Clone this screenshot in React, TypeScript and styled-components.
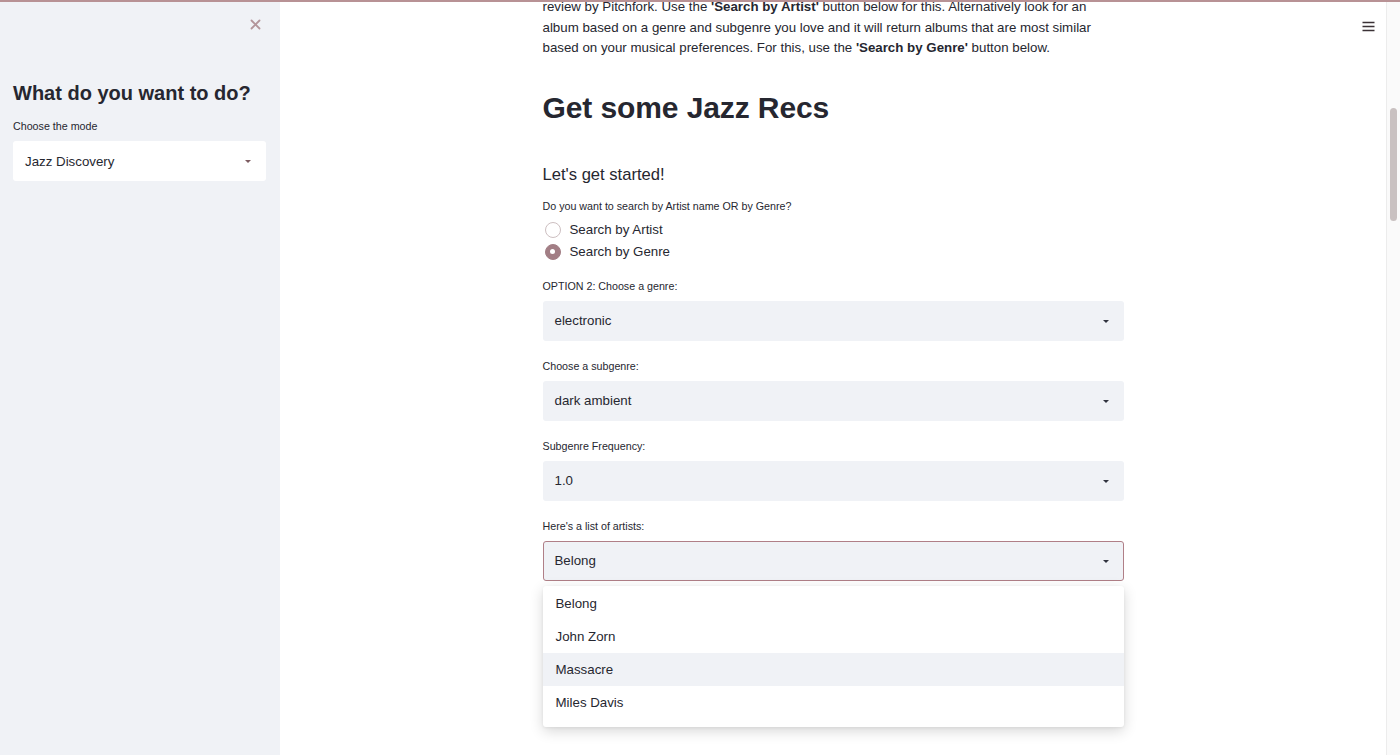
import React from 'react';
import styled, { createGlobalStyle } from 'styled-components';

const GlobalStyle = createGlobalStyle`
  html, body {
    margin: 0;
    padding: 0;
    background: #ffffff;
  }
  body {
    font-family: "Liberation Sans", Arial, Helvetica, sans-serif;
    color: #262730;
    -webkit-font-smoothing: antialiased;
  }
  * { box-sizing: border-box; }
`;

const Page = styled.div`
  width: 1400px;
  height: 755px;
  display: flex;
  flex-direction: column;
  overflow: hidden;
`;

const Decoration = styled.div`
  height: 2px;
  flex: none;
  background: #b89295;
`;

const Body = styled.div`
  flex: 1;
  display: flex;
  min-height: 0;
`;

const Sidebar = styled.aside`
  width: 280px;
  flex: none;
  background: #f0f2f6;
  padding: 0 14px 0 13px;
`;

const SidebarHeader = styled.div`
  height: 44px;
  display: flex;
  align-items: center;
  justify-content: flex-end;
  padding-right: 5px;
`;

const CloseButton = styled.button`
  width: 12px;
  height: 12px;
  padding: 0;
  border: none;
  background: none;
  display: flex;
  align-items: center;
  justify-content: center;
  cursor: pointer;
`;

const SidebarTitle = styled.h2`
  margin: 34px 0 13px;
  font-size: 20px;
  line-height: 26px;
  font-weight: 700;
  color: #262730;
  white-space: nowrap;
`;

const Main = styled.main`
  flex: 1;
  position: relative;
  overflow: hidden;
  background: #ffffff;
`;

const Column = styled.div`
  width: 581px;
  margin: 0 auto;
`;

const Intro = styled.p`
  margin: -5px 0 0;
  font-size: 13.3px;
  line-height: 20.5px;
  white-space: nowrap;
  b { font-weight: 700; }
`;

const Title = styled.h1`
  margin: 31px 0 0;
  font-size: 30px;
  line-height: 36px;
  font-weight: 700;
  letter-spacing: -0.1px;
`;

const Subtitle = styled.h3`
  margin: 37px 0 0;
  font-size: 16.6px;
  line-height: 24px;
  font-weight: 400;
`;

const Label = styled.div<{ $gap?: number }>`
  font-size: 10.7px;
  line-height: 14px;
  margin-bottom: ${p => p.$gap ?? 8}px;
  white-space: nowrap;
`;

const Question = styled.div`
  margin-top: 12px;
`;

const RadioGroup = styled.div`
  display: flex;
  flex-direction: column;
  margin-bottom: 16px;
`;

const RadioRow = styled.label`
  height: 22px;
  display: flex;
  align-items: center;
  gap: 9px;
  padding-left: 2px;
  font-size: 13.3px;
  cursor: pointer;
`;

const RadioDot = styled.span<{ $checked?: boolean }>`
  width: 16px;
  height: 16px;
  border-radius: 50%;
  flex: none;
  display: flex;
  align-items: center;
  justify-content: center;
  background: ${p => (p.$checked ? '#a27e85' : '#ffffff')};
  border: 1px solid ${p => (p.$checked ? '#a27e85' : '#cdbfc1')};
  &::after {
    content: '';
    width: 5px;
    height: 5px;
    border-radius: 50%;
    background: #ffffff;
    display: ${p => (p.$checked ? 'block' : 'none')};
  }
`;

const Field = styled.div`
  margin-bottom: 18px;
`;

const SelectWrap = styled.div`
  position: relative;
`;

const SelectBox = styled.div<{ $focused?: boolean; $white?: boolean }>`
  height: 40px;
  border-radius: 3px;
  background: ${p => (p.$white ? '#ffffff' : '#f0f2f6')};
  border: 1px solid ${p => (p.$focused ? '#b07f87' : 'transparent')};
  display: flex;
  align-items: center;
  justify-content: space-between;
  padding: 0 14px 0 11px;
  font-size: 13.3px;
  cursor: pointer;
`;

const Caret = styled.span<{ $tint?: string }>`
  width: 0;
  height: 0;
  border-left: 3px solid transparent;
  border-right: 3px solid transparent;
  border-top: 3px solid ${p => p.$tint ?? '#31333f'};
  margin-top: 1px;
`;

const Menu = styled.ul`
  position: absolute;
  left: 0;
  right: 0;
  top: calc(100% + 5px);
  margin: 0;
  padding: 1px 0 8px;
  list-style: none;
  background: #ffffff;
  border-radius: 3px;
  box-shadow: 0 4px 14px rgba(0, 0, 0, 0.16), 0 1px 3px rgba(0, 0, 0, 0.06);
  z-index: 5;
`;

const MenuItem = styled.li<{ $hover?: boolean }>`
  height: 33px;
  display: flex;
  align-items: center;
  padding-left: 13px;
  font-size: 13.3px;
  background: ${p => (p.$hover ? '#f0f2f6' : 'transparent')};
`;

const MenuButton = styled.button`
  position: absolute;
  top: 17px;
  right: 11px;
  width: 14px;
  height: 14px;
  padding: 0;
  border: none;
  background: none;
  display: flex;
  align-items: center;
  justify-content: center;
`;

const ScrollTrack = styled.div`
  width: 14px;
  flex: none;
  background: #fafafa;
  border-left: 1px solid #ececec;
  padding: 106px 0 0 3px;
`;

const ScrollThumb = styled.div`
  width: 7px;
  height: 113px;
  border-radius: 4px;
  background: #c9c1c1;
`;

const artists = ['Belong', 'John Zorn', 'Massacre', 'Miles Davis'];

const Select = ({ value, focused, white, tint, children }: any) => (
  <SelectWrap>
    <SelectBox $focused={focused} $white={white}>
      <span>{value}</span>
      <Caret $tint={tint} />
    </SelectBox>
    {children}
  </SelectWrap>
);

export default function App() {
  return (
    <>
      <GlobalStyle />
      <Page>
        <Decoration />
        <Body>
          <Sidebar>
            <SidebarHeader>
              <CloseButton aria-label="Close sidebar">
                <svg width="11" height="11" viewBox="0 0 11 11">
                  <path d="M1.5 1.5 L9.5 9.5 M9.5 1.5 L1.5 9.5" stroke="#b3959a" strokeWidth="1.8" strokeLinecap="round" />
                </svg>
              </CloseButton>
            </SidebarHeader>
            <SidebarTitle>What do you want to do?</SidebarTitle>
            <Label $gap={8}>Choose the mode</Label>
            <Select value="Jazz Discovery" white tint="#7d5c61" />
          </Sidebar>

          <Main>
            <MenuButton aria-label="Menu">
              <svg width="13" height="11" viewBox="0 0 13 11">
                <path d="M0.5 1.5 H12.5 M0.5 5.5 H12.5 M0.5 9.5 H12.5" stroke="#3b3236" strokeWidth="1.3" />
              </svg>
            </MenuButton>
            <Column>
              <Intro>
                review by Pitchfork. Use the <b>'Search by Artist'</b> button below for this. Alternatively look for an
                <br />
                album based on a genre and subgenre you love and it will return albums that are most similar
                <br />
                based on your musical preferences. For this, use the <b>'Search by Genre'</b> button below.
              </Intro>
              <Title>Get some Jazz Recs</Title>
              <Subtitle>Let's get started!</Subtitle>
              <Question>
                <Label $gap={6}>Do you want to search by Artist name OR by Genre?</Label>
              </Question>
              <RadioGroup>
                <RadioRow>
                  <RadioDot />
                  Search by Artist
                </RadioRow>
                <RadioRow>
                  <RadioDot $checked />
                  Search by Genre
                </RadioRow>
              </RadioGroup>

              <Field>
                <Label>OPTION 2: Choose a genre:</Label>
                <Select value="electronic" />
              </Field>
              <Field>
                <Label>Choose a subgenre:</Label>
                <Select value="dark ambient" />
              </Field>
              <Field>
                <Label>Subgenre Frequency:</Label>
                <Select value="1.0" />
              </Field>
              <Field>
                <Label>Here's a list of artists:</Label>
                <Select value="Belong" focused>
                  <Menu>
                    {artists.map(a => (
                      <MenuItem key={a} $hover={a === 'Massacre'}>{a}</MenuItem>
                    ))}
                  </Menu>
                </Select>
              </Field>
            </Column>
          </Main>

          <ScrollTrack>
            <ScrollThumb />
          </ScrollTrack>
        </Body>
      </Page>
    </>
  );
}
